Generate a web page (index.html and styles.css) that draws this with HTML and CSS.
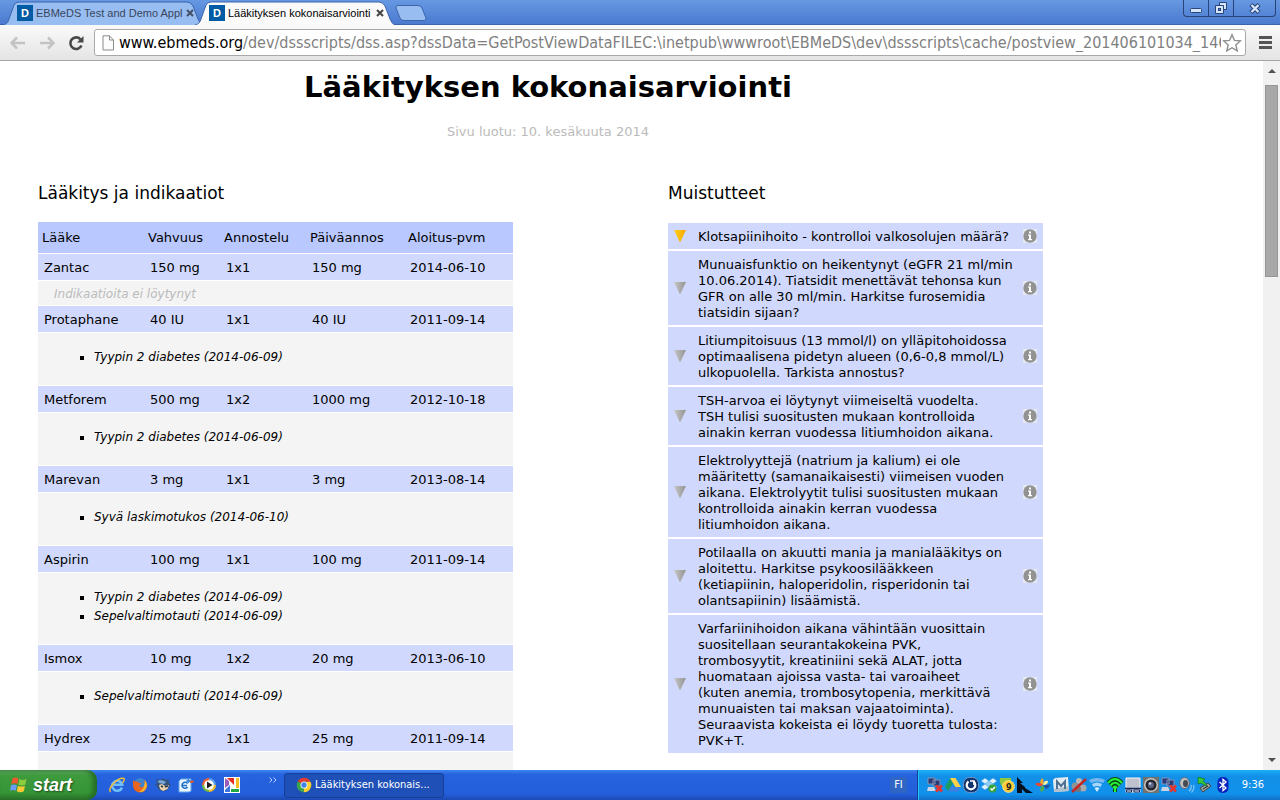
FILE: index.html
```html
<!DOCTYPE html>
<html lang="fi">
<head>
<meta charset="utf-8">
<meta name="viewport" content="width=device-width, initial-scale=1">
<title>Lääkityksen kokonaisarviointi</title>
<link rel="stylesheet" href="styles.css">
</head>
<body>
<header class="browser">
  <div class="tabstrip">
    <div class="tab tab-back">
      <svg class="tab-shape" viewBox="0 0 200 24" preserveAspectRatio="none"><path d="M0 24 C4 23 5 21 6 18 L11 4 Q12.500 1 16 1 H184 Q188 1 190 5 L195 18 Q197 23 200 24" fill="#98bdf1" stroke="#3b64ad"/></svg>
      <span class="favicon">D</span><span class="tab-title">EBMeDS Test and Demo Appl</span>
      <button class="tab-close" aria-label="Sulje välilehti"><svg width="8" height="8" viewBox="0 0 8 8"><path d="M1 1L7 7M7 1L1 7" stroke="#445067" stroke-width="2"/></svg></button>
    </div>
    <div class="tab tab-front">
      <svg class="tab-shape" viewBox="0 0 200 24" preserveAspectRatio="none"><path d="M0 24 C4 23 5 21 6 18 L11 4 Q12.500 1 16 1 H184 Q188 1 190 5 L195 18 Q197 23 200 24" fill="#fafafa" stroke="#3b64ad"/></svg>
      <span class="favicon">D</span><span class="tab-title">Lääkityksen kokonaisarviointi</span>
      <button class="tab-close" aria-label="Sulje välilehti"><svg width="8" height="8" viewBox="0 0 8 8"><path d="M1 1L7 7M7 1L1 7" stroke="#444" stroke-width="2"/></svg></button>
    </div>
    <button class="new-tab" aria-label="Uusi välilehti"><svg width="32" height="16" viewBox="0 0 32 16"><path d="M3 .5H23Q26 .5 27 3L31 13Q31.500 15.500 29 15.500H9Q6 15.500 5 13L1 3Q.5 .5 3 .5Z" fill="#98bdf1" stroke="#3b64ad"/></svg></button>
    <div class="window-controls">
      <button class="win-min" aria-label="Pienennä"><svg width="14" height="14" viewBox="0 0 14 14"><rect x="1.500" y="7.500" width="11" height="4" rx="1" fill="#d6e4fa" stroke="#294479"/></svg></button>
      <button class="win-max" aria-label="Palauta"><svg width="14" height="14" viewBox="0 0 14 14"><path d="M5.500 1.500H12.500V8.500H5.500Z" fill="#d6e4fa" stroke="#294479"/><path d="M1.500 4.500H9.500V12.500H1.500Z" fill="#d6e4fa" stroke="#294479"/><rect x="4.500" y="7.500" width="2" height="2" fill="#5a88d4" stroke="#294479"/></svg></button>
      <button class="win-close" aria-label="Sulje"><svg width="14" height="14" viewBox="0 0 14 14"><path d="M3 3.500L11 11.500M11 3.500L3 11.500" stroke="#294479" stroke-width="4.500"/><path d="M3.500 4L10.500 11M10.500 4L3.500 11" stroke="#d6e4fa" stroke-width="2.400"/></svg></button>
    </div>
  </div>
  <div class="toolbar">
    <button class="nav" aria-label="Takaisin"><svg width="16" height="14" viewBox="0 0 16 14"><path d="M15 7H2M7 1.500L1.500 7L7 12.500" fill="none" stroke="#c3c3c3" stroke-width="2.500"/></svg></button>
    <button class="nav" aria-label="Eteenpäin"><svg width="16" height="14" viewBox="0 0 16 14"><path d="M1 7H14M9 1.500L14.500 7L9 12.500" fill="none" stroke="#c3c3c3" stroke-width="2.500"/></svg></button>
    <button class="nav" aria-label="Lataa uudelleen"><svg width="16" height="16" viewBox="0 0 16 16"><path d="M12.500 4.300A5.800 5.800 0 1 0 13.500 10.500" fill="none" stroke="#484848" stroke-width="2.600"/><path d="M15.500 1V7.500H9Z" fill="#484848"/></svg></button>
    <div class="omnibox">
      <svg width="14" height="16" viewBox="0 0 14 16"><path d="M2 .8H8.500L12.500 5V15H2Z" fill="#fdfdfd" stroke="#8b8b8b"/><path d="M8.500 .8V5H12.500" fill="none" stroke="#8b8b8b"/></svg>
      <label class="host" for="url">www.ebmeds.org</label><input id="url" class="url" type="text" value="/dev/dssscripts/dss.asp?dssData=GetPostViewDataFILEC:\inetpub\wwwroot\EBMeDS\dev\dssscripts\cache/postview_201406101034_1468">
      <button class="star" aria-label="Lisää kirjanmerkki"><svg width="20" height="20" viewBox="0 0 20 20"><path d="M10 1.800L12.400 7.400L18.300 7.900L13.800 11.900L15.200 17.800L10 14.700L4.800 17.800L6.200 11.900L1.700 7.900L7.600 7.400Z" fill="#fff" stroke="#8d8d8d" stroke-width="1.400"/></svg></button>
    </div>
    <button class="menu" aria-label="Valikko"><svg width="13" height="13" viewBox="0 0 13 13"><path d="M0 1.500H13M0 6.500H13M0 11.500H13" stroke="#555" stroke-width="3"/></svg></button>
  </div>
</header>

<div class="viewport">
  <main class="page">
    <h1>Lääkityksen kokonaisarviointi</h1>
    <p class="created">Sivu luotu: 10. kesäkuuta 2014</p>
    <div class="columns">
      <section>
        <h2>Lääkitys ja indikaatiot</h2>
        <table class="meds">
          <colgroup><col class="c-name"><col class="c-strength"><col class="c-dose"><col class="c-daily"><col></colgroup>
          <thead><tr><th>Lääke</th><th>Vahvuus</th><th>Annostelu</th><th>Päiväannos</th><th>Aloitus-pvm</th></tr></thead>
          <tbody>
            <tr class="drug"><td>Zantac</td><td>150 mg</td><td>1x1</td><td>150 mg</td><td>2014-06-10</td></tr>
            <tr class="none"><td colspan="5">Indikaatioita ei löytynyt</td></tr>
            <tr class="drug"><td>Protaphane</td><td>40 IU</td><td>1x1</td><td>40 IU</td><td>2011-09-14</td></tr>
            <tr class="why"><td colspan="5"><ul><li>Tyypin 2 diabetes (2014-06-09)</li></ul></td></tr>
            <tr class="drug"><td>Metforem</td><td>500 mg</td><td>1x2</td><td>1000 mg</td><td>2012-10-18</td></tr>
            <tr class="why"><td colspan="5"><ul><li>Tyypin 2 diabetes (2014-06-09)</li></ul></td></tr>
            <tr class="drug"><td>Marevan</td><td>3 mg</td><td>1x1</td><td>3 mg</td><td>2013-08-14</td></tr>
            <tr class="why"><td colspan="5"><ul><li>Syvä laskimotukos (2014-06-10)</li></ul></td></tr>
            <tr class="drug"><td>Aspirin</td><td>100 mg</td><td>1x1</td><td>100 mg</td><td>2011-09-14</td></tr>
            <tr class="why"><td colspan="5"><ul><li>Tyypin 2 diabetes (2014-06-09)</li><li>Sepelvaltimotauti (2014-06-09)</li></ul></td></tr>
            <tr class="drug"><td>Ismox</td><td>10 mg</td><td>1x2</td><td>20 mg</td><td>2013-06-10</td></tr>
            <tr class="why"><td colspan="5"><ul><li>Sepelvaltimotauti (2014-06-09)</li></ul></td></tr>
            <tr class="drug"><td>Hydrex</td><td>25 mg</td><td>1x1</td><td>25 mg</td><td>2011-09-14</td></tr>
            <tr class="why"><td colspan="5"><ul></ul></td></tr>
          </tbody>
        </table>
      </section>
      <section>
        <h2>Muistutteet</h2>
        <svg class="defs" width="0" height="0" aria-hidden="true">
          <linearGradient id="gold" x1="0" x2="1"><stop offset="0" stop-color="#ffcf1c"/><stop offset="1" stop-color="#f5a800"/></linearGradient>
          <linearGradient id="grey" x1="0" x2="1"><stop offset="0" stop-color="#c8c8c8"/><stop offset="1" stop-color="#929292"/></linearGradient>
          <symbol id="tri" viewBox="0 0 12 12"><path d="M0 0H12L6.300 12H5.700Z"/></symbol>
          <symbol id="info" viewBox="0 0 14 14"><path d="M0 0H14V14H0Z" fill="#e6e9f3"/><circle cx="7" cy="7" r="6.700" fill="#929292"/><path d="M6 2.500H8V4.500H6ZM5 5.500H8V10H9V11.200H5V10H6V6.700H5Z" fill="#fff"/></symbol>
        </svg>
        <ul class="reminders">
          <li><svg class="tri gold"><use href="#tri"/></svg><p>Klotsapiinihoito - kontrolloi valkosolujen määrä?</p><button aria-label="Lisätietoja"><svg class="info"><use href="#info"/></svg></button></li>
          <li><svg class="tri"><use href="#tri"/></svg><p>Munuaisfunktio on heikentynyt (eGFR 21 ml/min<br>10.06.2014). Tiatsidit menettävät tehonsa kun<br>GFR on alle 30 ml/min. Harkitse furosemidia<br>tiatsidin sijaan?</p><button aria-label="Lisätietoja"><svg class="info"><use href="#info"/></svg></button></li>
          <li><svg class="tri"><use href="#tri"/></svg><p>Litiumpitoisuus (13 mmol/l) on ylläpitohoidossa<br>optimaalisena pidetyn alueen (0,6-0,8 mmol/L)<br>ulkopuolella. Tarkista annostus?</p><button aria-label="Lisätietoja"><svg class="info"><use href="#info"/></svg></button></li>
          <li><svg class="tri"><use href="#tri"/></svg><p>TSH-arvoa ei löytynyt viimeiseltä vuodelta.<br>TSH tulisi suositusten mukaan kontrolloida<br>ainakin kerran vuodessa litiumhoidon aikana.</p><button aria-label="Lisätietoja"><svg class="info"><use href="#info"/></svg></button></li>
          <li><svg class="tri"><use href="#tri"/></svg><p>Elektrolyyttejä (natrium ja kalium) ei ole<br>määritetty (samanaikaisesti) viimeisen vuoden<br>aikana. Elektrolyytit tulisi suositusten mukaan<br>kontrolloida ainakin kerran vuodessa<br>litiumhoidon aikana.</p><button aria-label="Lisätietoja"><svg class="info"><use href="#info"/></svg></button></li>
          <li><svg class="tri"><use href="#tri"/></svg><p>Potilaalla on akuutti mania ja manialääkitys on<br>aloitettu. Harkitse psykoosilääkkeen<br>(ketiapiinin, haloperidolin, risperidonin tai<br>olantsapiinin) lisäämistä.</p><button aria-label="Lisätietoja"><svg class="info"><use href="#info"/></svg></button></li>
          <li><svg class="tri"><use href="#tri"/></svg><p>Varfariinihoidon aikana vähintään vuosittain<br>suositellaan seurantakokeina PVK,<br>trombosyytit, kreatiniini sekä ALAT, jotta<br>huomataan ajoissa vasta- tai varoaiheet<br>(kuten anemia, trombosytopenia, merkittävä<br>munuaisten tai maksan vajaatoiminta).<br>Seuraavista kokeista ei löydy tuoretta tulosta:<br>PVK+T.</p><button aria-label="Lisätietoja"><svg class="info"><use href="#info"/></svg></button></li>
        </ul>
      </section>
    </div>
  </main>
  <div class="scrollbar">
    <svg width="8" height="4" viewBox="0 0 8 4"><path d="M0 4L4 0L8 4Z" fill="#505050"/></svg>
    <div class="track"><div class="thumb"></div></div>
    <svg width="8" height="4" viewBox="0 0 8 4"><path d="M0 0L4 4L8 0Z" fill="#505050"/></svg>
  </div>
</div>

<footer class="taskbar">
  <button class="start"><svg width="18" height="18" viewBox="0 0 18 18"><path d="M2.500 2.500Q5.500 .5 8.500 2.500L7.300 8Q4.500 6.500 1.300 8Z" fill="#ee5a2e"/><path d="M9.500 3Q12.500 5 16.500 3L15.300 8.500Q12 10.500 8.300 8.500Z" fill="#8ccc3c"/><path d="M1 9.200Q4 7.700 7 9.200L5.800 14.700Q3 13.200 0 14.700Z" fill="#6c9cf6"/><path d="M8 9.700Q11.500 11.500 15 9.700L13.800 15.200Q10.500 17.200 6.800 15.200Z" fill="#fbc934"/></svg>start</button>
  <div class="quick">
    <svg viewBox="0 0 16 16"><path d="M13 10.500A5 5 0 1 1 13.200 7.800H5" fill="none" stroke="#6ec0f8" stroke-width="2.600"/><path d="M1.500 15Q-1 12 5 6T15 1.500Q16 3 13.500 6" fill="none" stroke="#f4bd38" stroke-width="1.400"/></svg>
    <svg viewBox="0 0 16 16"><circle cx="8" cy="7.500" r="6.500" fill="#3f83cf"/><path d="M1 3Q3 5 5 4.500Q7 6 9 6Q9 8 7 8.500Q8 11 11 10Q14 8 12 3Q16 6 15 10Q13 15.500 8 15.500Q1 15 1 8Z" fill="#e9641c"/><path d="M13 3Q17 9 12.500 13.500Q10 15.500 7 15Q13 12 13 3Z" fill="#f8b431"/></svg>
    <svg viewBox="0 0 16 16"><path d="M1 2L5 3Q8 0 11 3L14 2L13.500 5L16 8L14 10Q12 15 7 14Q2 13 2 9L0 8L2 6Z" fill="#33547f"/><path d="M2.500 4Q7 2 11 5L9 7L4 6Z" fill="#7daad8"/><path d="M4 8L7 7L10 9L14 8L12.500 12L8 14L5 12Z" fill="#ecd2ad"/><path d="M6 9L8 10M10 10L13 9" fill="none" stroke="#283545" stroke-width="1.500"/></svg>
    <svg viewBox="0 0 16 16"><path d="M3 2H13V14L11 15H1V4Z" fill="#e8f4ff" stroke="#62a8e5"/><path d="M9.500 10A3 3 0 1 1 9.500 6.500M4.500 8.500H9" fill="none" stroke="#1e70c5" stroke-width="1.600"/><path d="M8 4L11 1.500V3Q14 3 14 6Q12 5 11 5V6.500Z" fill="#3389df"/><path d="M12 5L15.500 4.500" stroke="#e35b28" stroke-width="2"/></svg>
    <svg viewBox="0 0 16 16"><path d="M8 1A7 7 0 0 0 1 8H8Z" fill="#ef6132"/><path d="M8 1A7 7 0 0 1 15 8H8Z" fill="#5c9fe8"/><path d="M1 8A7 7 0 0 0 8 15V8Z" fill="#75b93e"/><path d="M15 8A7 7 0 0 1 8 15V8Z" fill="#f5bd2f"/><circle cx="8" cy="8" r="4.800" fill="#fff"/><path d="M6 4.500L11.500 8L6 11.500Z" fill="#222"/></svg>
    <svg viewBox="0 0 16 16"><path d="M0 0H16V16H0Z" fill="#fff"/><path d="M1 1L5 4V8L1 11Z" fill="#9c5bb8"/><path d="M3 1H10V8Z" fill="#e52c23"/><path d="M1 13L6 8V15H1Z" fill="#3d74e0"/><path d="M12 1H15V11H12Z" fill="#f5be1c"/><path d="M7 12H15V15H7Z" fill="#21a846"/></svg>
  </div>
  <button class="more" aria-label="Näytä lisää"><svg width="8" height="6" viewBox="0 0 8 6"><path d="M.5 .5L3 3L.5 5.500M4.500 .5L7 3L4.500 5.500" fill="none" stroke="#b8d2ff"/></svg></button>
  <button class="task"><svg width="16" height="16" viewBox="0 0 16 16"><path d="M8 8L1.700 4.400A7.200 7.200 0 0 1 14.500 4.800H8Z" fill="#e33b2e"/><path d="M8 8L11 4.800H14.500A7.200 7.200 0 0 1 7.500 15.200Z" fill="#fbcf2d"/><path d="M8 8L7.500 15.200A7.200 7.200 0 0 1 1.700 4.400Z" fill="#3aa648"/><circle cx="8" cy="8" r="3.500" fill="#fff"/><circle cx="8" cy="8" r="2.700" fill="#3f83e8"/></svg><span>Lääkityksen kokonais...</span></button>
  <span class="lang">FI</span>
  <div class="tray">
    <svg viewBox="0 0 16 16"><path d="M1 1H8V7H1ZM6 3H13V9H6Z" fill="#273c79" stroke="#8894b8"/><path d="M1 10H7L9 14H0Z" fill="#cbd3e3"/><path d="M9 8.500L15 14.500M15 8.500L9 14.500" stroke="#e8322c" stroke-width="2.500"/></svg>
    <svg viewBox="0 0 16 16"><path d="M5 1L8 6L3.500 14L0 10Z" fill="#1d9b62"/><path d="M5 1H10.500L16 10H10.500Z" fill="#fdd04a"/><path d="M5.500 10H16L13 14.500H3Z" fill="#3e7fe0"/></svg>
    <svg viewBox="0 0 16 16"><rect x=".5" y=".5" width="15" height="15" rx="6" fill="#12346c" stroke="#7195c9"/><path d="M5.500 4.500A4.300 4.300 0 1 0 10.500 4.500" fill="none" stroke="#fff" stroke-width="2.200"/><path d="M7 4H11V8" fill="none" stroke="#fff" stroke-width="1.500"/></svg>
    <svg viewBox="0 0 16 16"><path d="M4 1L8 4L4 7L0 4ZM12 1L16 4L12 7L8 4ZM4 7L8 10L4 13L0 10ZM12 7L16 10L12 13L8 10Z" fill="#dff2ff" stroke="#3b9ae0" stroke-width=".6"/><path d="M8 4L12 7L8 10L4 7Z" fill="#8ecbf5"/><circle cx="11.500" cy="11.500" r="4" fill="#38a23c"/><path d="M9.500 11.500L11 13L14 10" fill="none" stroke="#fff" stroke-width="1.500"/></svg>
    <svg viewBox="0 0 16 16"><path d="M1 1H12V6L6 11Q0 9 1 1Z" fill="#91c83c"/><circle cx="9.500" cy="9.500" r="6" fill="#ffcc35" stroke="#fff3b5" stroke-width=".6"/><text x="7" y="13" class="badge">9</text></svg>
    <svg viewBox="0 0 16 16"><path d="M0 0L6 6H3L8 10V11L16 16H9L5 12V16H0Z" fill="#06101c"/></svg>
    <svg viewBox="0 0 16 16"><path d="M7.500 8Q3 6 7 1Q10 4 7.500 8Z" fill="#f7a42b"/><path d="M8 8Q9 3 13 4Q13 8 8 8Z" fill="#fff1a0"/><path d="M8 8Q12 9 15.500 7Q14 11 11 12Z" fill="#224e9b"/><path d="M8 8Q11 13 6 15Q4 11 8 8Z" fill="#4fae49"/><path d="M8 8Q4 11 0 7Q4 4 8 8Z" fill="#e94b32"/></svg>
    <svg viewBox="0 0 16 16"><path d="M2 1L15 0L16 14L1 15L0 3Z" fill="#e2ebf2"/><path d="M1 12L16 9V14L1 15Z" fill="#b1c0cd"/><path d="M4 12V4.500L8 9L12 4.500V12" fill="none" stroke="#4e7192" stroke-width="2"/></svg>
    <svg viewBox="0 0 16 16"><circle cx="8" cy="4" r="3" fill="#b8b8b8"/><circle cx="4" cy="9" r="3.500" fill="#929292"/><circle cx="12" cy="11" r="3.500" fill="#aaa"/><circle cx="7" cy="12" r="3" fill="#777"/><path d="M1 15L15 2" stroke="#c92622" stroke-width="2.400"/></svg>
    <svg viewBox="0 0 16 16"><path d="M0 3Q8 -1 16 3L14 6Q8 3 2 6Z" fill="#77b9ee"/><path d="M3 7Q8 4 13 7L11.500 10Q8 8 4.500 10Z" fill="#a9d5fa"/><path d="M5.500 11Q8 9.500 10.500 11L8 15Z" fill="#d5ecff"/></svg>
    <svg viewBox="0 0 16 16"><path d="M1 6Q8 -2 15 6M3.500 8.500Q8 3 12.500 8.500M6 11Q8 8 10 11M8 9V15" fill="none" stroke="#064b16" stroke-width="4"/><path d="M1 6Q8 -2 15 6M3.500 8.500Q8 3 12.500 8.500M6 11Q8 8 10 11M8 9V15" fill="none" stroke="#28ef38" stroke-width="2"/></svg>
    <svg viewBox="0 0 16 16"><path d="M1 1H15V15H1Z" fill="#bfc1ce" stroke="#f7f7f7"/><path d="M0 11.500H16" stroke="#14265a" stroke-width="1.500"/><path d="M1.500 13H6.500V15H1.500ZM9 13H14.500V15H9Z" fill="#fff" stroke="#14265a"/></svg>
    <svg viewBox="0 0 16 16"><path d="M0 0H16V16H0Z" fill="#74716b"/><circle cx="8" cy="8" r="7" fill="#c6c6c4"/><circle cx="8" cy="8" r="5.500" fill="#25272d"/><circle cx="8" cy="8" r="3" fill="#5d6587"/><circle cx="7" cy="6.500" r="1.300" fill="#ccd3e9"/></svg>
    <svg viewBox="0 0 16 16"><path d="M1 1H8V7H1ZM6 3H13V9H6Z" fill="#273c79" stroke="#8894b8"/><path d="M1 10H7L9 14H0Z" fill="#cbd3e3"/><path d="M9 8.500L15 14.500M15 8.500L9 14.500" stroke="#e8322c" stroke-width="2.500"/></svg>
    <svg viewBox="0 0 16 16"><ellipse cx="5.500" cy="6" rx="4.800" ry="5.500" fill="#bfc2c5" stroke="#667"/><ellipse cx="6.500" cy="6.500" rx="2.500" ry="3.500" fill="#454a50"/><path d="M10 14Q13 12 12 8M12.500 15.500Q16 12 14.500 8" fill="none" stroke="#87c7fa" stroke-width="1.200"/></svg>
    <svg viewBox="0 0 16 16"><path d="M3 11L11 6L14 9L6 15Z" fill="#9aa09b" stroke="#444"/><path d="M6 12L11 9" stroke="#222"/><path d="M1 0L8 2L6 4Q9 6 10 9Q6 8 4 6L1 7Z" fill="#36c83a" stroke="#08621c" stroke-width=".6"/></svg>
    <svg viewBox="0 0 16 16"><rect x="2.500" y="0" width="11" height="16" rx="5" fill="#0722bd"/><path d="M4.500 5L11 11L8 13.500V2.500L11 5L4.500 11" fill="none" stroke="#fff" stroke-width="1.300"/></svg>
    <time>9:36</time>
  </div>
</footer>
</body>
</html>
```
FILE: styles.css
```css
* { box-sizing: border-box; }
body {
  margin: 0;
  height: 100vh;
  display: flex;
  flex-direction: column;
  overflow: hidden;
  background: #fff;
  color: #000;
  font: 13px/16px "DejaVu Sans", Verdana, sans-serif;
}
button { padding: 0; border: 0; background: none; font: inherit; color: inherit; }
svg { display: block; flex: none; }

/* Browser window */
.browser, .taskbar { flex: none; font-family: "DejaVu Sans Condensed", Tahoma, sans-serif; }
.tabstrip {
  display: flex;
  height: 25px;
  padding-left: 3px;
  background: linear-gradient(#6698e2, #4b7acf);
  border-bottom: 1px solid #3b64ad;
}
.tab {
  position: relative;
  display: flex;
  align-items: center;
  gap: 3px;
  width: 200px;
  height: 24px;
  margin-top: 1px;
  padding: 0 9px 0 14px;
  font-family: "Liberation Sans", Arial, sans-serif;
  font-size: 11px;
}
.tab-back { color: #39465c; }
.tab-front { z-index: 1; margin-left: -8px; }
.tab-shape { position: absolute; inset: 0; width: 100%; height: 100%; }
.favicon {
  position: relative;
  flex: none;
  width: 16px;
  background: #005ba5;
  color: #fff;
  font-weight: bold;
  text-align: center;
}
.tab-title { position: relative; flex: 1; white-space: nowrap; }
.tab-close { position: relative; width: 16px; display: flex; justify-content: center; }
.new-tab { margin: 5px 0 0 0; align-self: flex-start; }
.window-controls { display: flex; height: 17px; margin: 0 4px 0 auto; border: 1px solid #294479; border-top: 0; border-radius: 0 0 4px 4px; }
.window-controls button { display: flex; align-items: center; justify-content: center; width: 25px; border-right: 1px solid #294479; }
.window-controls .win-close { width: 41px; border: 0; }

.toolbar {
  display: flex;
  align-items: center;
  height: 36px;
  padding: 0 8px 0 10px;
  gap: 13px;
  background: linear-gradient(#fafafa, #e4e4e4);
  border-bottom: 1px solid #a5a5a5;
}
.omnibox {
  display: flex;
  align-items: center;
  flex: 1;
  min-width: 0;
  height: 27px;
  margin-left: -3px;
  padding: 0 3px 0 6px;
  background: #fff;
  border: 1px solid #a9a9a9;
  border-radius: 3px;
  font-size: 16px;
}
.host { margin-left: 4px; }
.url { flex: 1; min-width: 0; margin-right: 1px; padding: 0; border: 0; outline: 0; background: none; color: #808080; font: inherit; }

/* Page */
.viewport { flex: 1; display: flex; min-height: 0; }
.page { flex: 1; min-width: 0; padding: 9px 0 0 38px; overflow: hidden; }
h1 { max-width: 1020px; margin: 0; text-align: center; font-size: 29px; line-height: 34px; }
.created { max-width: 1020px; margin: 20px 0 0; text-align: center; color: #bbb; }
.columns { display: grid; grid-template-columns: 475px 375px; gap: 155px; margin-top: 42px; }
h2 { margin: 0 0 18px; font-size: 17px; line-height: 22px; font-weight: normal; }

.meds { width: 100%; table-layout: fixed; border-spacing: 0 1px; margin-top: -1px; white-space: nowrap; }
.c-name { width: 106px; }
.c-strength { width: 76px; }
.c-dose { width: 86px; }
.c-daily { width: 98px; }
.meds th { height: 31px; padding: 0 4px; background: #b9c8fe; font-weight: normal; text-align: left; }
.meds td { padding: 0 6px; }
.meds .drug td { height: 26px; padding-top: 2px; background: #d0d9fd; }
.meds .none td { height: 24px; padding: 2px 16px 0; background: #f4f4f4; color: #bbb; font-size: 12px; font-style: italic; }
.meds .why td { background: #f4f4f4; font-size: 12px; font-style: italic; }
.why ul { margin: 0; padding: 15px 0 18px 50px; list-style: square; line-height: 19px; }

.defs { position: absolute; }
.reminders { display: grid; gap: 2px; margin: 0; padding: 1px 0 0; list-style: none; }
.reminders li { display: flex; align-items: center; padding: 4px 6px; background: #d0d9fd; }
.reminders p { flex: 1; min-width: 0; margin: 0 0 0 12px; padding: 2px 0 0; white-space: nowrap; }
.tri { width: 12px; height: 12px; fill: url(#grey); }
.tri.gold { fill: url(#gold); }
.info { width: 14px; height: 14px; }

.scrollbar { display: flex; flex-direction: column; align-items: center; width: 17px; padding: 8px 0; background: #f1f1f1; }
.track { flex: 1; width: 13px; padding: 12px 0; }
.thumb { height: 29%; background: #a8a8a8; border: 1px solid #969696; }

/* Taskbar */
.taskbar {
  display: flex;
  align-items: center;
  height: 30px;
  background: linear-gradient(#3f86f0, #2663de 15%, #245edb 80%, #1c49b4);
  color: #fff;
  font-size: 11px;
}
.start {
  display: flex;
  align-items: center;
  gap: 5px;
  width: 97px;
  height: 30px;
  padding-left: 10px;
  background: linear-gradient(#5fa95f, #3d9a3d 20%, #369536 75%, #2a742a);
  border-radius: 0 10px 10px 0;
  box-shadow: inset -4px 0 5px #256b25;
  font: italic bold 18px "Liberation Sans", Arial, sans-serif;
  text-shadow: 1px 1px 2px #1c4a1c;
}
.quick { display: flex; gap: 7px; margin-left: 12px; }
.quick svg, .tray svg { width: 16px; height: 16px; }
.more { margin: 0 7px 10px 29px; }
.task {
  display: flex;
  align-items: center;
  gap: 3px;
  width: 160px;
  height: 25px;
  padding-left: 11px;
  background: #1e50b8;
  border: 1px solid #173f97;
  border-radius: 3px;
  white-space: nowrap;
}
.lang { margin: 0 10px 0 auto; padding: 0 4px; background: #2f66c4; }
.tray {
  display: flex;
  align-items: center;
  gap: 2px;
  height: 30px;
  padding: 0 16px 0 9px;
  background: linear-gradient(#1cb0f4, #1290e8 20%, #1191ea 80%, #0f6fc8);
  border-left: 1px solid #123f9c;
  box-shadow: inset 1px 0 #27c3f7;
}
.tray time { margin-left: 9px; }
.badge { font: bold 9px "DejaVu Sans Condensed", sans-serif; fill: #222; }
```
